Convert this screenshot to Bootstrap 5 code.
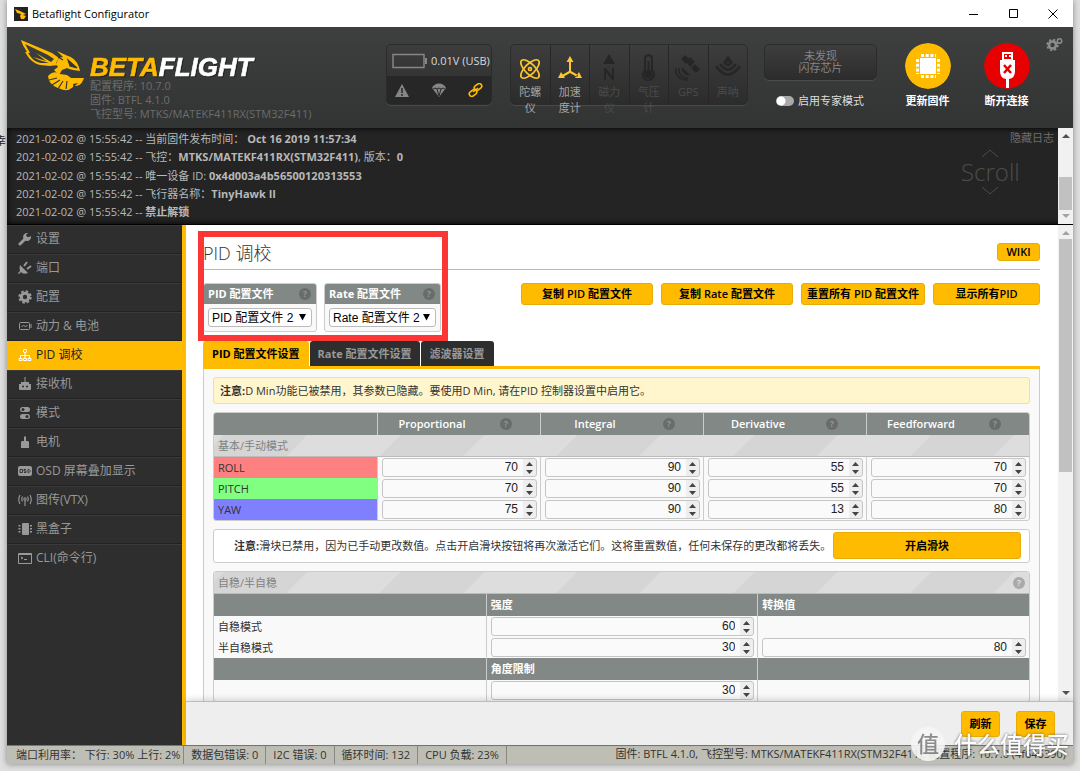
<!DOCTYPE html>
<html lang="zh-CN">
<head>
<meta charset="utf-8">
<meta name="viewport" content="width=device-width, initial-scale=1">
<title>Betaflight Configurator</title>
<link href="https://cdn.jsdelivr.net/npm/bootstrap@5.3.0/dist/css/bootstrap.min.css" rel="stylesheet">
<style>
:root{--bf:#ffbb00;--line:#ccc}
html,body{height:100%}
body{background:#dfdfdf;font-family:"Open Sans","Noto Sans CJK SC",sans-serif;font-size:11px;line-height:16px;color:#333;overflow:hidden}
button,input,select{font-family:inherit}
.app{height:calc(100vh - 7px);margin:0 7px;background:#fff;box-shadow:0 0 6px rgba(0,0,0,.4)}
.titlebar{height:27px;font-size:11px;color:#000;padding:0 14px 0 7px}
.titlebar button,.plain{border:0;background:none;padding:0;line-height:1}
.top{height:101px;background:linear-gradient(#3e403f,#323433);padding:0 10px 0 13px}
.brand-col{width:366px}
.logo-text{font:italic bold 26px/24px "Liberation Sans",sans-serif;color:#fff;-webkit-text-stroke:.6px #fff;filter:drop-shadow(1px 1px 0 #222)}
.logo-text span{color:var(--bf);-webkit-text-stroke:.6px var(--bf)}
.version{color:#6b6d6c;line-height:14px}
.well{border:1px solid #2b2b2b;border-radius:5px;background:linear-gradient(#3d3d3d,#2c2c2c);box-shadow:0 1px 0 rgba(255,255,255,.1)}
.batt{width:106px;height:61px;margin-top:17px}
.batt .lower{background:#272727;height:28px}
.sensors{width:238px;height:61px;margin:17px 0 0 18px}
.sensor{flex:1 1 0;padding:6px 6px 0;text-align:center;color:#4b4b4b;border-right:1px solid #272727;line-height:16px}
.sensor:last-child{border-right:0}
.sensor.on{color:#a5a5a5}
.sensor svg{display:block;margin:0 auto 3px}
.flash-col{width:113px;padding-top:17px}
.flash{height:36px;color:#868686;line-height:12px}
.expert{color:#ddd;margin-top:13px}
.expert input{appearance:none;width:18px;height:10px;border-radius:5px;margin:0;background:radial-gradient(circle at 5px 5px,#fff 4px,transparent 5px),#aaa}
.rnd{width:46px;height:46px;border-radius:50%}
.actbtn{width:79px;color:#fff;font-weight:600;line-height:16px}
.log{height:97px;background:#242424;color:#b8b8b8;box-shadow:inset 0 0 6px #000;border-bottom:1px solid #000}
.loglines{padding:3px 9px 4px}
.scrollhint{width:113px;color:#4d4d4d;padding-top:2px}
.scrollhint .big{font-size:24px;line-height:20px;font-weight:300}
.hidelog{color:#6c6c6c;text-decoration:none}
.bar{width:15px;flex:none;background:#f1f1f1;padding:5px 1px}
.bar i{display:block;background:#c1c1c1}
.side{width:179px;flex:none;background:#2e2e2e;border-right:4px solid var(--bf)}
.side a{height:29px;font-size:12px;color:#999;text-decoration:none;padding-left:11px;border-bottom:1px solid #222;box-shadow:inset 0 1px 0 #3a3a3a}
.side li:last-child a{border-bottom:0;height:27px}
.side a.active{background:var(--bf);color:#222;border-color:var(--bf);box-shadow:none}
.side svg{width:14px;height:14px;margin-right:4px}
.page{padding:18px 18px 0 17px}
.page h1{font-size:18px;font-weight:300;line-height:20px;color:#333;margin:0}
.pagehead{height:27px;border-bottom:1px solid var(--bf);margin-bottom:13px}
.ybtn{background:var(--bf);border:1px solid #e8ac08;border-radius:3px;color:#000;font-weight:600;padding:0;line-height:16px;text-align:center}
.ybtn.mid{height:22px}
.ybtn.save{width:39px;height:26px}
.prof{border:1px solid var(--line);border-radius:3px;background:#f9f9f9;overflow:hidden}
.prof label{height:20px;background:#828885;color:#fff;font-weight:700;padding:0 5px 0 4px}
.prof select{appearance:none;width:100%;height:19px;border:1px solid #bbb;border-radius:3px;padding:0 0 0 3px;color:#000;font:12px/16px "Liberation Sans","Noto Sans CJK SC",sans-serif;background:#fff url("data:image/svg+xml,%3Csvg xmlns='http://www.w3.org/2000/svg' width='8' height='7'%3E%3Cpath d='M0 0h7L3.500 6.500z'/%3E%3C/svg%3E") no-repeat right 4px top 5px}
.prof .inner{padding:4px}
.help{width:12px;height:12px;border-radius:50%;background:#686c6a;color:#929693;font-size:9px;line-height:12px;font-weight:700;text-align:center;flex:none}
.help.light-q{background:#aaa;color:#ddd}
.frame-mark{position:absolute;left:12px;top:6px;width:250px;height:110px;border:6px solid #fc3535;pointer-events:none}
.tabsrow{border-bottom:3px solid var(--bf);margin-top:9px;gap:1px}
.tabsrow button{height:25px;border:0;background:#2e2e2e;color:#999;font-weight:700;border-radius:3px 3px 0 0;padding:0 9px}
.tabsrow button.active{background:var(--bf);color:#000}
.panel{border:1px solid var(--line);border-top:0;background:#f9f9f9;padding:8px 9px}
.note{border:1px solid #ffe55f;border-radius:3px;background:#fff6cd;height:27px;padding:4px 6px;line-height:17px}
.tbl{width:100%;table-layout:fixed;border-collapse:separate;border-spacing:0;border:1px solid var(--line);border-radius:3px;overflow:hidden}
.tbl th,.tbl td{padding:0 4px;height:21px;border-left:1px solid var(--line)}
.tbl tr>:first-child{border-left:0}
.tbl thead th,.tbl .hd th{background:#828885;color:#fff;font-weight:600;height:22px}
.tbl .hd th{font-weight:700}
.tbl thead span:first-child{padding-right:18px}
.tbl .stripe{height:22px;color:#828282;border-bottom:1px solid #bbb;background:repeating-linear-gradient(135deg,#ddd 0 7px,#d5d5d5 7px 66px,#ddd 66px 125px)}
.tbl tbody th{font-weight:400}
.num{display:block;width:100%;height:19px;appearance:textfield;-moz-appearance:textfield;border:1px solid #c5c5c5;border-radius:3px;text-align:right;padding:0 18px 1px 3px;color:#222;font:12px/16px "Liberation Sans",sans-serif;background:#fafafa url("data:image/svg+xml,%3Csvg xmlns='http://www.w3.org/2000/svg' width='13' height='17'%3E%3Cpath fill='%23eee' d='M0 0h13v17H0z'/%3E%3Cpath fill='%23444' d='M3 7h7L6.500 3zM3 11h7l-3.500 4z'/%3E%3C/svg%3E") no-repeat right top}
.num::-webkit-inner-spin-button{appearance:none;margin:0}
.tbl td.cell{padding:0 3px 0 4px}
.tbl .roll{background:#ff8080}.tbl .pitch{background:#80ff80}.tbl .yaw{background:#8080ff}
.slider-note{border:1px solid var(--line);border-radius:3px;background:#fff;padding:2px 8px 3px 20px}
.foot{height:44px;flex:none;background:#eee;border-top:1px solid #bbb;padding:9px 18px 0;box-shadow:0 -2px 6px rgba(0,0,0,.15)}
.status{height:19px;flex:none;background:#bfbeb5;border-top:1px solid #777;color:#333;padding-right:7px}
.status div{border-right:1px solid #888;padding:0 7px;line-height:18px}
.status div:first-child{padding:0 3px 0 9px}
.wm{position:absolute;right:11px;bottom:10px;color:#fff;font-size:23px;font-weight:500;line-height:32px;text-shadow:0 0 3px #555;opacity:.95}
.wm b{width:34px;height:34px;border-radius:50%;background:rgba(245,245,245,.95);color:#888;font-weight:500;font-size:22px;line-height:32px;text-align:center;text-shadow:none;margin-right:9px}
.behind{position:absolute;left:0;top:133px;width:6px;overflow:hidden;direction:rtl;color:#222}
</style>
</head>
<body class="position-relative">
<div class="behind" aria-hidden="true">幸</div>
<div class="app d-flex flex-column">
  <header class="titlebar d-flex align-items-center flex-shrink-0">
    <svg width="14" height="14" viewBox="0 0 14 14" class="me-1"><path fill="#222" d="M0 0h14v14H0z"/><path fill="#fb0" d="M1 2l5 2 2 1 4 2-3 1 3 1-2 3H7L6 9l1-2-4-1z"/></svg>
    <span>Betaflight Configurator</span>
    <div class="ms-auto d-flex gap-4 align-items-center">
      <button aria-label="最小化" class="me-1"><svg width="12" height="12"><path d="M1 6.500h9" stroke="#000"/></svg></button>
      <button aria-label="最大化" class="me-1"><svg width="11" height="12"><path d="M1.500 1.500h8v8h-8z" fill="none" stroke="#000"/></svg></button>
      <button aria-label="关闭"><svg width="12" height="12"><path d="M1.500 1.500l9 9m0-9l-9 9" stroke="#000"/></svg></button>
    </div>
  </header>

  <div class="top d-flex flex-shrink-0">
    <div class="brand-col d-flex flex-shrink-0">
      <svg width="66" height="56" viewBox="0 0 66 56" class="mt-2 flex-shrink-0"><g fill="#fb0"><path fill-rule="evenodd" d="M1 5l31 13 7 5-3 5 2 2-8 1-10-1C11 28 7 20 5 17l2 0C4 12 2 9 1 5zm4 4l5 9H8c4 6 7 9 13 10l8 0-10-3-6-3 13 4-10-8 15 9 3-3-6-4z"/><path d="M37 16l11 5c6 2 10 6 12 15-5-1-9-1-13-3l-5 2-3 5-5-5 4-3-2-3 3-6 4-1z"/><path d="M28 41c5-5 9-4 12-2l7 1 4 3 13 0c-2 6-5 8-9 8l3-3-5 1c1 3-1 4-3 5-2 2-8 1-9 0-7-2-12-5-13-13z"/></g><path d="M48 25l9 8-7-2zM29 45l8-2M32 50l8-5M38 54l5-8M46 54l1-8M38 22l5 3" fill="#343635" stroke="#343635" stroke-width="1.200"/></svg>
      <div class="pt-4 ms-1">
        <div class="logo-text mt-1"><span>BETA</span>FLIGHT</div>
        <div class="version text-nowrap">配置程序: 10.7.0<br>固件: BTFL 4.1.0<br>飞控型号: MTKS/MATEKF411RX(STM32F411)</div>
      </div>
    </div>
    <div class="well batt overflow-hidden flex-shrink-0">
      <div class="d-flex align-items-center ps-1" style="height:31px">
        <svg width="36" height="16" class="flex-shrink-0"><path d="M2 1.500h31v13H2z" fill="none" stroke="#868686" stroke-width="1.500"/><path d="M34 5h2v6h-2z" fill="#868686"/></svg>
        <span class="text-nowrap ms-1" style="color:#d8d8d8">0.01V (USB)</span>
      </div>
      <div class="lower d-flex align-items-center justify-content-between px-2">
        <svg width="14" height="13"><path d="M7 0l7 13H0z" fill="#868686"/><path d="M7 4v5M7 10v2" stroke="#272727" stroke-width="1.500"/></svg>
        <svg width="14" height="14"><path d="M0 5C2-1 12-1 14 5L7 14z" fill="#868686"/><path d="M1 6q2-2 4 0 2-2 4 0 2-2 4 0M5 6l2 7 2-7" fill="none" stroke="#272727"/></svg>
        <svg width="15" height="14" fill="none" stroke="#fb0" stroke-width="1.600"><rect x="6" y="1.500" width="8" height="5" rx="2.500" transform="rotate(-38 10 4)"/><rect x="1" y="7.500" width="8" height="5" rx="2.500" transform="rotate(-38 5 10)"/><path d="M5 9l5-4"/></svg>
      </div>
    </div>
    <div class="well sensors d-flex flex-shrink-0">
      <div class="sensor on"><svg width="26" height="30" viewBox="0 0 26 30" fill="none" stroke="#ffc52b" stroke-width="1.700"><ellipse cx="13" cy="18" rx="5" ry="12" transform="rotate(45 13 18)"/><ellipse cx="13" cy="18" rx="5" ry="12" transform="rotate(-45 13 18)"/><circle cx="13" cy="18" r="1.500"/></svg>陀螺仪</div>
      <div class="sensor on"><svg width="26" height="30" viewBox="0 0 26 30" fill="#ffc52b"><path d="M12 10h2v10l7 4-1 2-7-4-7 4-1-2 7-4zM9.500 11L13 5l3.500 6zM1 27l3-6 4 6zM25 27l-3-6-4 6z"/></svg>加速度计</div>
      <div class="sensor"><svg width="26" height="30" viewBox="0 0 26 30" fill="#262626"><path d="M7 13l6-10 6 10zM8 29V17h2l6 8v-8h2v12h-2l-6-8v8z"/></svg>磁力仪</div>
      <div class="sensor"><svg width="26" height="30" viewBox="0 0 26 30" fill="none" stroke="#262626" stroke-width="2"><path d="M9 19V8c0-5 7-5 7 0v11c5 5 0 10-4 10s-7-5-3-10z"/><circle cx="12.500" cy="23" r="3" fill="#262626"/><path d="M12.500 10v12"/></svg>气压计</div>
      <div class="sensor"><svg width="26" height="30" viewBox="0 0 26 30" fill="#262626"><path d="M6 8l4-4 5 5-4 4zM11 10l4-4 5 5-5 5zM16 17l4-4 5 5-4 4zM7 16l8 8c-4 2-10-4-8-8z"/><path d="M4 17c-1 6 3 10 9 10M1 17c-1 8 4 12 12 12" fill="none" stroke="#262626" stroke-width="1.500"/></svg>GPS</div>
      <div class="sensor"><svg width="26" height="30" viewBox="0 0 26 30" fill="none" stroke="#262626" stroke-width="2.500"><path d="M1 15q12 17 24 0M5 13q8 11 16 0M9 11q4 6 8 0"/><path d="M11 10l2-3 2 3z"/></svg>声呐</div>
    </div>
    <div class="flash-col ms-3 flex-shrink-0">
      <div class="well flash d-flex align-items-center justify-content-center text-center">未发现<br>闪存芯片</div>
      <label class="expert d-flex align-items-center ms-2 ps-1"><input type="checkbox" role="switch" class="me-1">启用专家模式</label>
    </div>
    <div class="d-flex ms-auto pt-3 align-items-start">
      <button class="plain actbtn"><svg class="rnd" viewBox="0 0 46 46"><circle cx="23" cy="23" r="23" fill="#fb0"/><path fill="#fff" d="M15 15h16v16H15z"/><path stroke="#fff" stroke-width="3" stroke-dasharray="3 1.700" d="M16 12.500h15M16 33.500h15M12.500 16v15M33.500 16v15" fill="none"/></svg><span class="d-block mt-1">更新固件</span></button>
      <button class="plain actbtn"><svg class="rnd" viewBox="0 0 46 46"><circle cx="23" cy="23" r="23" fill="#e60000"/><path fill="#fff" d="M18 9h11v8h2v11q0 7-6 8v9h-3v-9q-6-1-6-8V17h2z"/><path d="M20 11h7v5h-7z" fill="#e60000"/><path fill="#fff" d="M21 12h2v2h-2zM25 12h2v2h-2z"/><path d="M20 22l7 8m0-8l-7 8" stroke="#e60000" stroke-width="2.500"/></svg><span class="d-block mt-1">断开连接</span></button>
      <button class="plain" style="margin-top:-6px" aria-label="设置"><svg width="17" height="16" fill="none" stroke="#8c8c8c"><circle cx="6.500" cy="8" r="3.500" stroke-width="2.600"/><circle cx="6.500" cy="8" r="5.300" stroke-width="1.800" stroke-dasharray="2.200 1.960"/><circle cx="13.500" cy="4" r="2.200" stroke-width="1.500"/></svg></button>
    </div>
  </div>

  <div class="log d-flex flex-shrink-0">
    <div class="loglines flex-grow-1 d-flex flex-column justify-content-between">
      <div>2021-02-02 @ 15:55:42 -- 当前固件发布时间： <b>Oct 16 2019 11:57:34</b></div>
      <div>2021-02-02 @ 15:55:42 -- 飞控：<b>MTKS/MATEKF411RX(STM32F411)</b>, 版本：<b>0</b></div>
      <div>2021-02-02 @ 15:55:42 -- 唯一设备 ID: <b>0x4d003a4b56500120313553</b></div>
      <div>2021-02-02 @ 15:55:42 -- 飞行器名称：<b>TinyHawk II</b></div>
      <div>2021-02-02 @ 15:55:42 -- <b>禁止解锁</b></div>
    </div>
    <div class="scrollhint flex-shrink-0 pe-1">
      <div class="text-end"><a class="hidelog" href="#">隐藏日志</a></div>
      <div class="d-inline-flex flex-column align-items-center gap-1 ms-3">
        <svg width="18" height="9" fill="none" stroke="#4d4d4d"><path d="M1 8l8-7 8 7"/></svg>
        <span class="big">Scroll</span>
        <svg width="18" height="9" fill="none" stroke="#4d4d4d"><path d="M1 1l8 7 8-7"/></svg>
      </div>
    </div>
    <div class="bar d-flex flex-column align-items-center"><svg width="8" height="5"><path d="M0 5l4-4 4 4z" fill="#505050"/></svg><i class="w-100 mt-auto" style="height:38%"></i><svg width="8" height="5" class="mt-1"><path d="M0 0l4 4 4-4z" fill="#a3a3a3"/></svg></div>
  </div>

  <div class="d-flex flex-grow-1" style="min-height:0">
    <nav class="side"><ul class="list-unstyled m-0">
      <li><a class="d-flex align-items-center" href="#"><svg viewBox="0 0 14 14"><path d="M2 12l6-6" stroke="#999" stroke-width="3" stroke-linecap="round"/><path d="M13 4a4 4 0 1 1-3-3L8 3l1 2 2 0z" fill="#999"/></svg>设置</a></li>
      <li><a class="d-flex align-items-center" href="#"><svg viewBox="0 0 14 14" fill="#999"><path d="M2 4l8 8q-5 2-7-1l-2 2-1-1 2-2q-1-3 0-6z"/><path d="M6 5l3-4M9 8l4-3" stroke="#999" stroke-width="2"/></svg>端口</a></li>
      <li><a class="d-flex align-items-center" href="#"><svg viewBox="0 0 14 14" fill="none" stroke="#999"><circle cx="7" cy="7" r="3.700" stroke-width="3"/><circle cx="7" cy="7" r="5.700" stroke-width="2" stroke-dasharray="2.500 1.970"/></svg>配置</a></li>
      <li><a class="d-flex align-items-center" href="#"><svg viewBox="0 0 14 14" fill="none" stroke="#999"><rect x="1.500" y="3.500" width="10" height="7" rx="1"/><path d="M3.500 7.500l2-1 2 1 2-1M13 5v4"/></svg>动力 &amp; 电池</a></li>
      <li><a class="d-flex align-items-center active" href="#"><svg viewBox="0 0 14 14" fill="none" stroke="#fff"><circle cx="7" cy="3" r="1.700"/><path d="M7 5v5M2.500 10V7.500h9V10"/><path d="M1 10.500h3v2H1zM5.500 10.500h3v2h-3zM10 10.500h3v2h-3z"/></svg>PID 调校</a></li>
      <li><a class="d-flex align-items-center" href="#"><svg viewBox="0 0 14 14" fill="#999"><path d="M6.500 0h1v5h-1zM3 5h8v2h2v5q0 1-1 1H2q-1 0-1-1V7h2z"/><circle cx="5" cy="9.500" r="1" fill="#2e2e2e"/><circle cx="9" cy="9.500" r="1" fill="#2e2e2e"/></svg>接收机</a></li>
      <li><a class="d-flex align-items-center" href="#"><svg viewBox="0 0 14 14"><rect x="2" y="1" width="10" height="5" rx="2.500" fill="#999"/><rect x="2" y="8" width="10" height="5" rx="2.500" fill="#999"/><circle cx="5" cy="3.500" r="1.500" fill="#2e2e2e"/><circle cx="9" cy="10.500" r="1.500" fill="#2e2e2e"/></svg>模式</a></li>
      <li><a class="d-flex align-items-center" href="#"><svg viewBox="0 0 14 14" fill="#999"><path d="M6 2l1-1 1 1v4h2l1 1v6H3V7l1-1h2z"/></svg>电机</a></li>
      <li><a class="d-flex align-items-center" href="#"><svg viewBox="0 0 14 14"><rect y="2" width="14" height="10" rx="2" fill="#999"/><path d="M2 5.500h2.500v3H2zM8 5.500H6V7h2v1.500H6M10 5.500h1l1 1v1l-1 1h-1z" fill="none" stroke="#2e2e2e" stroke-width=".9"/></svg>OSD 屏幕叠加显示</a></li>
      <li><a class="d-flex align-items-center" href="#"><svg viewBox="0 0 14 14" fill="none" stroke="#999" stroke-width="1.100"><circle cx="7" cy="6" r="1.200"/><path d="M7 7v6M4.500 3.500q-1.500 2.500 0 5M9.500 3.500q1.500 2.500 0 5M2 2q-2.500 4.500 0 9M12 2q2.500 4.500 0 9"/></svg>图传(VTX)</a></li>
      <li><a class="d-flex align-items-center" href="#"><svg viewBox="0 0 14 14"><rect x="4" y="1" width="7" height="12" rx="1" fill="#999"/><path d="M1.500 3v9M13 3v9" stroke="#999" stroke-width="2" stroke-dasharray="1.500 1.500"/></svg>黑盒子</a></li>
      <li><a class="d-flex align-items-center" href="#"><svg viewBox="0 0 14 14" fill="none" stroke="#999"><path d="M.5 2.500h13v10H.5zM.5 3.500h13M3 6l2 1-2 1M6 8.500h3"/></svg>CLI(命令行)</a></li>
    </ul></nav>

    <div class="flex-grow-1 d-flex flex-column" style="min-width:0">
      <div class="d-flex flex-grow-1 overflow-hidden" style="min-height:0">
        <main class="page flex-grow-1 position-relative" style="min-width:0">
          <div class="pagehead d-flex justify-content-between align-items-start"><h1>PID 调校</h1><button class="ybtn" style="width:43px">WIKI</button></div>
          <div class="d-flex align-items-start">
            <div class="prof" style="width:114px"><label for="p1" class="d-flex align-items-center justify-content-between">PID 配置文件<span class="help">?</span></label><div class="inner"><select id="p1"><option>PID 配置文件 2</option></select></div></div>
            <div class="prof" style="width:117px;margin-left:7px"><label for="p2" class="d-flex align-items-center justify-content-between">Rate 配置文件<span class="help">?</span></label><div class="inner"><select id="p2"><option>Rate 配置文件 2</option></select></div></div>
            <div class="d-flex ms-auto gap-2">
              <button class="ybtn mid" style="width:132px">复制 PID 配置文件</button>
              <button class="ybtn mid" style="width:132px">复制 Rate 配置文件</button>
              <button class="ybtn mid" style="width:124px">重置所有 PID 配置文件</button>
              <button class="ybtn mid" style="width:107px">显示所有PID</button>
            </div>
          </div>
          <div class="tabsrow d-flex"><button class="active">PID 配置文件设置</button><button class="px-2">Rate 配置文件设置</button><button>滤波器设置</button></div>
          <div class="panel">
            <div class="note"><b>注意:</b>D Min功能已被禁用，其参数已隐藏。要使用D Min, 请在PID 控制器设置中启用它。</div>
            <table class="tbl mt-2">
              <thead><tr><th></th>
                <th><div class="d-flex align-items-center"><span class="flex-grow-1 text-center">Proportional</span><span class="help me-4">?</span></div></th>
                <th><div class="d-flex align-items-center"><span class="flex-grow-1 text-center">Integral</span><span class="help me-4">?</span></div></th>
                <th><div class="d-flex align-items-center"><span class="flex-grow-1 text-center">Derivative</span><span class="help me-4">?</span></div></th>
                <th><div class="d-flex align-items-center"><span class="flex-grow-1 text-center">Feedforward</span><span class="help me-4">?</span></div></th></tr></thead>
              <tbody>
                <tr><td colspan="5" class="stripe">基本/手动模式</td></tr>
                <tr><th class="roll">ROLL</th><td class="cell"><input class="num" type="number" value="70" aria-label="ROLL P"></td><td class="cell"><input class="num" type="number" value="90" aria-label="ROLL I"></td><td class="cell"><input class="num" type="number" value="55" aria-label="ROLL D"></td><td class="cell"><input class="num" type="number" value="70" aria-label="ROLL F"></td></tr>
                <tr><th class="pitch">PITCH</th><td class="cell"><input class="num" type="number" value="70" aria-label="PITCH P"></td><td class="cell"><input class="num" type="number" value="90" aria-label="PITCH I"></td><td class="cell"><input class="num" type="number" value="55" aria-label="PITCH D"></td><td class="cell"><input class="num" type="number" value="70" aria-label="PITCH F"></td></tr>
                <tr><th class="yaw">YAW</th><td class="cell"><input class="num" type="number" value="75" aria-label="YAW P"></td><td class="cell"><input class="num" type="number" value="90" aria-label="YAW I"></td><td class="cell"><input class="num" type="number" value="13" aria-label="YAW D"></td><td class="cell"><input class="num" type="number" value="80" aria-label="YAW F"></td></tr>
              </tbody>
            </table>
            <div class="slider-note mt-2 d-flex align-items-center justify-content-between"><span class="text-nowrap"><b>注意:</b>滑块已禁用，因为已手动更改数值。点击开启滑块按钮将再次激活它们。这将重置数值，任何未保存的更改都将丢失。</span><button class="ybtn flex-shrink-0" style="width:188px;height:27px">开启滑块</button></div>
            <table class="tbl mt-2">
              <tbody>
                <tr><td colspan="3" class="stripe"><div class="d-flex justify-content-between align-items-center"><span>自稳/半自稳</span><span class="help light-q">?</span></div></td></tr>
                <tr class="hd"><th></th><th>强度</th><th>转换值</th></tr>
                <tr><th>自稳模式</th><td class="cell"><input class="num" type="number" value="60" aria-label="自稳 强度"></td><td></td></tr>
                <tr><th>半自稳模式</th><td class="cell"><input class="num" type="number" value="30" aria-label="半自稳 强度"></td><td class="cell"><input class="num" type="number" value="80" aria-label="半自稳 转换值"></td></tr>
                <tr class="hd"><th></th><th>角度限制</th><th></th></tr>
                <tr><th></th><td class="cell"><input class="num" type="number" value="30" aria-label="角度限制"></td><td></td></tr>
              </tbody>
            </table>
          </div>
          <div class="frame-mark"></div>
        </main>
        <div class="bar d-flex flex-column align-items-center"><svg width="8" height="5"><path d="M0 5l4-4 4 4z" fill="#a3a3a3"/></svg><i class="w-100 mt-1" style="height:50%"></i><svg width="8" height="5" class="mt-auto"><path d="M0 0l4 4 4-4z" fill="#505050"/></svg></div>
      </div>
      <div class="foot position-relative d-flex justify-content-end gap-3"><button class="ybtn save">刷新</button><button class="ybtn save">保存</button></div>
    </div>
  </div>

  <footer class="status d-flex text-nowrap">
    <div>端口利用率： 下行: 30% 上行: 2%</div><div>数据包错误: 0</div><div>I2C 错误: 0</div><div>循环时间: 132</div><div>CPU 负载: 23%</div>
    <span class="ms-auto">固件: BTFL 4.1.0, 飞控型号: MTKS/MATEKF411RX(STM32F411), 配置程序: 10.7.0 (4f646390)</span>
  </footer>
</div>
<div class="wm d-flex align-items-center"><b>值</b>什么值得买</div>
<script src="https://cdn.jsdelivr.net/npm/bootstrap@5.3.0/dist/js/bootstrap.bundle.min.js"></script>
</body>
</html>
